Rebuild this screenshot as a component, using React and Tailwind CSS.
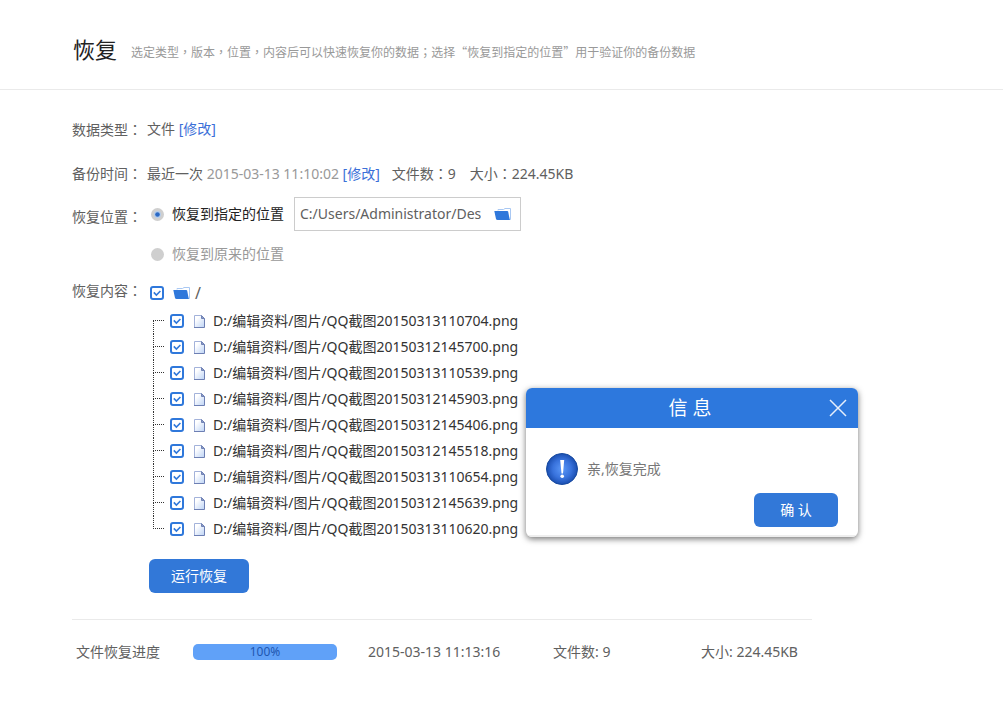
import React, { useState } from "react";

const FILES = [
  "D:/编辑资料/图片/QQ截图20150313110704.png",
  "D:/编辑资料/图片/QQ截图20150312145700.png",
  "D:/编辑资料/图片/QQ截图20150313110539.png",
  "D:/编辑资料/图片/QQ截图20150312145903.png",
  "D:/编辑资料/图片/QQ截图20150312145406.png",
  "D:/编辑资料/图片/QQ截图20150312145518.png",
  "D:/编辑资料/图片/QQ截图20150313110654.png",
  "D:/编辑资料/图片/QQ截图20150312145639.png",
  "D:/编辑资料/图片/QQ截图20150313110620.png",
];

/* Full-width punctuation centred in its cell. */
function P({ children }) {
  return <span className="font-['Noto_Sans_CJK_TC',sans-serif]">{children}</span>;
}

function FolderIcon() {
  return (
    <svg width="18" height="13" viewBox="0 0 18 13" className="shrink-0" aria-hidden="true">
      <path d="M4 2.5V1.5H9.5L11 .5H16.5V11.5H13" fill="#fff" stroke="#a9c8f3" />
      <path d="M0.3 3H13.2Q14 3 14.2 3.8L15.8 12H3.6Q2.4 12 2 11Z" fill="#2f78db" />
    </svg>
  );
}

function FileIcon() {
  return (
    <svg width="13" height="15" viewBox="0 0 13 15" className="shrink-0" aria-hidden="true">
      <defs>
        <linearGradient id="sheet" x1="0" y1="0" x2="1" y2="1">
          <stop offset="0.25" stopColor="#ffffff" />
          <stop offset="1" stopColor="#bdd3f5" />
        </linearGradient>
      </defs>
      <path d="M1.5 1.5H8.5L11.5 4.5V13.5H1.5Z" fill="url(#sheet)" />
      <path d="M1.5 13.5V1.5H8.5" fill="none" stroke="#a3b2da" />
      <path d="M8.5 1.5V4.5H11.5Z" fill="#8c9bc9" stroke="#7183b5" />
      <path d="M11.5 4.5V13.5H1" fill="none" stroke="#6d7fb3" />
    </svg>
  );
}

function Checkbox({ label }) {
  return (
    <span className="grid size-[14px] shrink-0">
      <input
        type="checkbox"
        defaultChecked
        aria-label={label}
        className="peer col-start-1 row-start-1 m-0 size-[14px] appearance-none rounded-[3px] border-2 border-[#2f78db] bg-white"
      />
      <svg
        viewBox="0 0 14 14"
        aria-hidden="true"
        className="pointer-events-none invisible col-start-1 row-start-1 size-[14px] peer-checked:visible"
      >
        <path d="M3.8 6.4L6.4 9L10.4 5" fill="none" stroke="#2f78db" strokeWidth="1.6" />
      </svg>
    </span>
  );
}

function Radio({ id, checked, onChange }) {
  return (
    <span className="grid size-[13px] shrink-0">
      <input
        type="radio"
        name="target"
        id={id}
        checked={checked}
        onChange={onChange}
        className="peer col-start-1 row-start-1 m-0 size-[13px] appearance-none rounded-full bg-[#cfcfcf]"
      />
      <svg
        viewBox="0 0 13 13"
        aria-hidden="true"
        className="pointer-events-none invisible col-start-1 row-start-1 size-[13px] peer-checked:visible"
      >
        <circle cx="6.5" cy="6.5" r="3.4" fill="#b3cdee" />
        <circle cx="6.5" cy="6.5" r="2.3" fill="#2a69c4" />
      </svg>
    </span>
  );
}

function Row({ label, children }) {
  return (
    <div className="flex">
      <div className="h-5 w-[75px] shrink-0 whitespace-nowrap">
        {label}
        <P>：</P>
      </div>
      <div className="min-w-0">{children}</div>
    </div>
  );
}

function Dialog({ onClose }) {
  return (
    <div
      role="dialog"
      aria-labelledby="dialog-title"
      className="absolute top-[388px] left-[526px] w-[332px] overflow-hidden rounded-[6px] bg-white shadow-[0_2px_6px_rgba(0,0,0,0.55)]"
    >
      <div className="flex h-10 items-center bg-[#2d78dd] px-2 text-white">
        <h2 id="dialog-title" className="flex-1 pl-5 text-center text-[19px]">
          信 息
        </h2>
        <button type="button" aria-label="关闭" onClick={onClose} className="grid size-6 place-items-center">
          <svg width="18" height="18" viewBox="0 0 18 18" aria-hidden="true">
            <path d="M1 1L17 17M17 1L1 17" stroke="#e6effb" strokeWidth="1.5" />
          </svg>
        </button>
      </div>
      <div className="flex items-center gap-[9px] px-5 pt-[25px]">
        <svg width="32" height="32" viewBox="0 0 32 32" aria-hidden="true">
          <defs>
            <radialGradient id="ball">
              <stop offset="0" stopColor="#5b98f8" />
              <stop offset="0.6" stopColor="#3872dc" />
              <stop offset="1" stopColor="#1a4eb0" />
            </radialGradient>
          </defs>
          <circle cx="16" cy="16" r="15.5" fill="url(#ball)" stroke="#184a9f" />
          <path d="M14.2 7H18.2L17 20.5H15.5Z" fill="#fff" />
          <circle cx="16.2" cy="23.2" r="1.8" fill="#fff" />
        </svg>
        <p className="text-[#777]">亲,恢复完成</p>
      </div>
      <div className="flex justify-end border-b-2 border-[#eee] px-5 pt-2 pb-2">
        <button type="button" onClick={onClose} className="h-[34px] w-[84px] rounded-[6px] bg-[#3278d8] text-white">
          确 认
        </button>
      </div>
    </div>
  );
}

export default function App() {
  const [target, setTarget] = useState("custom");
  const [open, setOpen] = useState(true);

  return (
    <div className="relative min-h-screen bg-white pb-8 font-['Noto_Sans','Noto_Sans_CJK_SC',sans-serif] text-sm leading-5 text-[#606060]">
      <header className="flex h-[90px] items-center gap-[14px] border-b border-[#eaeaea] pt-2 pl-[73px]">
        <h1 className="text-[22px] leading-8 text-[#222]">恢复</h1>
        <p className="pt-[6px] font-['Noto_Sans_CJK_SC',sans-serif] text-xs text-[#999]">
          选定类型<P>，</P>版本<P>，</P>位置<P>，</P>内容后可以快速恢复你的数据<P>；</P>选择“恢复到指定的位置”用于验证你的备份数据
        </p>
      </header>

      <main className="max-w-[812px] pt-[29px] pl-[72px]">
        <div className="flex flex-col gap-6">
          <Row label="数据类型">
            文件 <a href="#type" className="text-[#3b6fd8]">[修改]</a>
          </Row>
          <Row label="备份时间">
            最近一次 <span className="text-[#999]">2015-03-13 11:10:02</span>{" "}
            <a href="#time" className="text-[#3b6fd8]">[修改]</a>
            <span className="ml-3">文件数<P>：</P>9</span>
            <span className="ml-[14px]">大小<P>：</P>224.45KB</span>
          </Row>
        </div>

        <div className="mt-[13px] flex">
          <div className="w-[75px] shrink-0 whitespace-nowrap pt-[9px]">
            恢复位置<P>：</P>
          </div>
          <div className="flex flex-col gap-[13px] pl-1">
            <div className="flex items-center">
              <Radio id="custom" checked={target === "custom"} onChange={() => setTarget("custom")} />
              <label htmlFor="custom" className="ml-2 text-[#222]">恢复到指定的位置</label>
              <div className="ml-[10px] flex h-[34px] w-[227px] items-center border border-[#ccc] pr-2 pl-[5px]">
                <input
                  type="text"
                  aria-label="恢复位置"
                  defaultValue="C:/Users/Administrator/Desktop"
                  className="mr-[13px] w-0 flex-1 bg-transparent outline-none"
                />
                <button type="button" aria-label="选择文件夹">
                  <FolderIcon />
                </button>
              </div>
            </div>
            <div className="flex items-center">
              <Radio id="origin" checked={target === "origin"} onChange={() => setTarget("origin")} />
              <label htmlFor="origin" className="ml-2 text-[#999]">恢复到原来的位置</label>
            </div>
          </div>
        </div>

        <div className="mt-4 flex">
          <div className="w-[75px] shrink-0 whitespace-nowrap">
            恢复内容<P>：</P>
          </div>
          <div className="pl-[3px]">
            <div className="flex h-[26px] items-center">
              <Checkbox label="/" />
              <span className="ml-[9px] flex items-center gap-1 text-base leading-5">
                <FolderIcon />/
              </span>
            </div>
            <ul className="pt-[2px] pl-[3px] text-[#333]">
              {FILES.map((name, i) => (
                <li key={name} className="flex h-[26px] items-center">
                  <span className="flex w-[11px] flex-col self-stretch" aria-hidden="true">
                    <span
                      className={
                        i === 0
                          ? "h-[13px] border-b border-dotted border-[#333]"
                          : "h-[13px] border-b border-l border-dotted border-[#333]"
                      }
                    />
                    <span className={i === FILES.length - 1 ? "h-[13px]" : "h-[13px] border-l border-dotted border-[#333]"} />
                  </span>
                  <span className="ml-[6px] flex items-center">
                    <Checkbox label={name} />
                    <span className="ml-[9px] flex">
                      <FileIcon />
                    </span>
                    <span className="ml-[7px] whitespace-nowrap">{name}</span>
                  </span>
                </li>
              ))}
            </ul>
          </div>
        </div>

        <button type="button" className="mt-[17px] ml-[77px] h-[34px] w-[100px] rounded-[6px] bg-[#3278d8] text-white">
          运行恢复
        </button>

        <div className="mt-[26px] flex items-center border-t border-[#eaeaea] pt-[22px] pl-1">
          <span className="w-[117px]">文件恢复进度</span>
          <div
            role="progressbar"
            aria-label="文件恢复进度"
            aria-valuenow={100}
            className="h-4 w-36 rounded-[5px] bg-[#60a1f8] text-center text-xs leading-4 text-[#1f57b0]"
          >
            100%
          </div>
          <span className="ml-[31px] w-[185px]">2015-03-13 11:13:16</span>
          <span className="w-[148px]">文件数: 9</span>
          <span>大小: 224.45KB</span>
        </div>
      </main>

      {open && <Dialog onClose={() => setOpen(false)} />}
    </div>
  );
}
